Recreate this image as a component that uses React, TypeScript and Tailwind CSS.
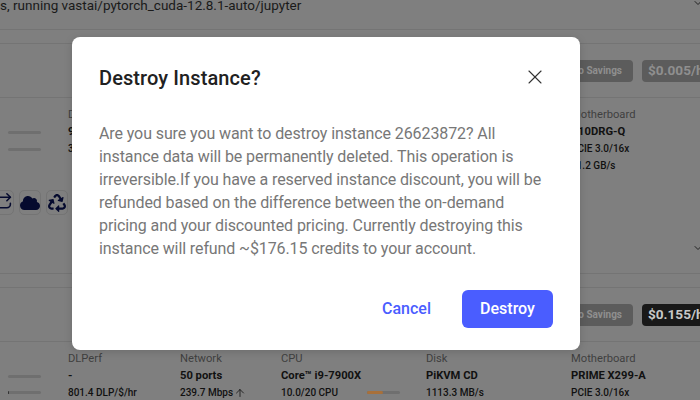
import React from "react";
import { ArrowUp, ChevronDown, Repeat, X } from "lucide-react";
import { FaCloud, FaRecycle } from "react-icons/fa";

const font = { fontFamily: "Roboto, sans-serif" };

type Col = { width: string; label: string; value: string; lines: string[] };

function SpecColumn({ col }: { col: Col }) {
  return (
    <div className={`${col.width} shrink-0 whitespace-nowrap`}>
      <p className="text-[11.2px] leading-[14px] text-[#3f3f3f]">{col.label}</p>
      <p className="mt-[3px] text-[11.2px] leading-[14px] font-bold text-[#111]">{col.value}</p>
      {col.lines.map((line) => (
        <p key={line} className="mt-[3px] text-[10px] leading-[14px] font-medium text-[#111]">
          {line}
        </p>
      ))}
    </div>
  );
}

function Meter({ fill = 0 }: { fill?: number }) {
  return (
    <div className="h-[3px] w-[33px] rounded-full bg-[#6f6f6f]">
      {fill > 0 && <div className="h-[3px] rounded-full bg-[#333]" style={{ width: fill }} />}
    </div>
  );
}

function PriceRow({ price, dark }: { price: string; dark?: boolean }) {
  return (
    <div className="flex h-[54px] items-center justify-end overflow-hidden border-b border-[#747474]">
      <span className="mr-[9px] flex h-[22px] w-[73px] items-center justify-end rounded-[4px] bg-[#5c5c5c] pr-[11px] text-[10px] font-bold text-[#8f8f8f]">
        No Savings
      </span>
      <span
        className={`flex h-[22px] w-[70px] -mr-[12px] shrink-0 items-center rounded-[4px] pl-[6px] text-[13.6px] font-bold whitespace-nowrap ${
          dark ? "bg-[#191919] text-[#c8c8c8]" : "bg-[#5c5c5c] text-[#8f8f8f]"
        }`}
      >
        {price}
      </span>
    </div>
  );
}

export default function App() {
  return (
    <div style={font} className="relative h-[400px] w-[700px] overflow-hidden bg-[#7f7f7f]">
      <div className="h-[30px] overflow-hidden border-b border-[#747474]">
        <p className="-mt-[4px] whitespace-nowrap text-[13.5px] leading-[18px] text-[#1a1a1a]">
          s, running vastai/pytorch_cuda-12.8.1-auto/jupyter
        </p>
      </div>
      <div className="absolute top-[-3px] right-[-4px] text-[#222]">
        <ChevronDown size={12} />
      </div>

      <div className="h-[14px] border-b border-[#747474]" />
      <PriceRow price="$0.005/hr" />

      <div className="flex h-[176px] border-b border-[#747474]">
        <div className="w-[68px] shrink-0">
          <div className="flex flex-col gap-[14px] pl-[8px] pt-[33px]">
            <Meter />
            <Meter />
          </div>
          <div className="mt-[39px] -ml-[9px] flex gap-[5px]">
            <span className="flex h-[25px] w-[26px] items-center justify-center rounded-[5px] border border-[#747474] text-[#050a2e]">
              <Repeat size={21} strokeWidth={1.8} />
            </span>
            <span className="flex h-[25px] w-[26px] items-center justify-center rounded-[5px] border border-[#747474] text-[#050a2e]">
              <FaCloud size={20} />
            </span>
            <span className="flex h-[25px] w-[26px] items-center justify-center rounded-[5px] border border-[#747474] text-[#050a2e]">
              <FaRecycle size={18} />
            </span>
          </div>
        </div>
        <div className="pt-[10px]">
          <SpecColumn col={{ width: "w-[100px]", label: "DLPerf", value: "9", lines: ["3"] }} />
        </div>
        <div className="ml-auto w-[129px] pt-[10px]">
          <SpecColumn
            col={{
              width: "w-[129px]",
              label: "Motherboard",
              value: "X10DRG-Q",
              lines: ["PCIE 3.0/16x", "11.2 GB/s"],
            }}
          />
        </div>
      </div>

      <div className="h-[14px] border-b border-[#747474]" />
      <PriceRow price="$0.155/hr" dark />

      <div className="flex pt-[10px]">
        <div className="flex w-[68px] shrink-0 flex-col gap-[13px] pl-[8px] pt-[23px]">
          <Meter />
          <Meter fill={1} />
        </div>
        <SpecColumn col={{ width: "w-[112px]", label: "DLPerf", value: "-", lines: ["801.4 DLP/$/hr"] }} />
        <div className="w-[101px] shrink-0 whitespace-nowrap">
          <p className="text-[11.2px] leading-[14px] text-[#3f3f3f]">Network</p>
          <p className="mt-[3px] text-[11.2px] leading-[14px] font-bold text-[#111]">50 ports</p>
          <p className="mt-[3px] flex items-center text-[10px] leading-[14px] font-medium text-[#111]">
            239.7 Mbps
            <ArrowUp size={12} strokeWidth={1.6} className="ml-[1px]" />
          </p>
        </div>
        <div className="relative w-[145px] shrink-0">
          <SpecColumn col={{ width: "w-[145px]", label: "CPU", value: "Core™ i9-7900X", lines: ["10.0/20 CPU"] }} />
          <div className="absolute top-[39px] left-[86px] h-[3px] w-[33px] rounded-full bg-[#6f6f6f]">
            <div className="h-[3px] w-[16px] rounded-full bg-[#a8703a]" />
          </div>
        </div>
        <SpecColumn col={{ width: "w-[145px]", label: "Disk", value: "PiKVM CD", lines: ["1113.3 MB/s"] }} />
        <SpecColumn col={{ width: "w-[129px]", label: "Motherboard", value: "PRIME X299-A", lines: ["PCIE 3.0/16x"] }} />
      </div>

      <div className="absolute top-[242px] right-[-4px] text-[#222]">
        <ChevronDown size={12} />
      </div>

      <div className="absolute top-[37px] left-[72px] flex h-[313px] w-[508px] flex-col rounded-[8px] bg-white pt-[28px] pr-[27px] pb-[22px] pl-[27px] shadow-[0_2px_8px_rgba(0,0,0,0.15)]">
        <div className="flex h-[26px] items-center justify-between">
          <h2 className="text-[20px] leading-[26px] font-medium tracking-[0.1px] text-[#212121]">Destroy Instance?</h2>
          <X size={24} strokeWidth={1.1} className="mr-[6px] -mt-[2px] text-[#333]" />
        </div>
        <p className="mt-[31px] text-[16px] leading-[23px] tracking-[-0.1px] text-[#777]">
          Are you sure you want to destroy instance 26623872? All instance data will be permanently deleted. This
          operation is irreversible.If you have a reserved instance discount, you will be refunded based on the
          difference between the on-demand pricing and your discounted pricing. Currently destroying this instance
          will refund ~$176.15 credits to your account.
        </p>
        <div className="mt-auto flex items-center justify-end gap-[31px]">
          <button className="text-[16px] font-medium text-[#4a5dff]">Cancel</button>
          <button className="h-[38px] w-[91px] rounded-[6px] bg-[#4a5dff] text-[16px] font-medium text-white">
            Destroy
          </button>
        </div>
      </div>
    </div>
  );
}
